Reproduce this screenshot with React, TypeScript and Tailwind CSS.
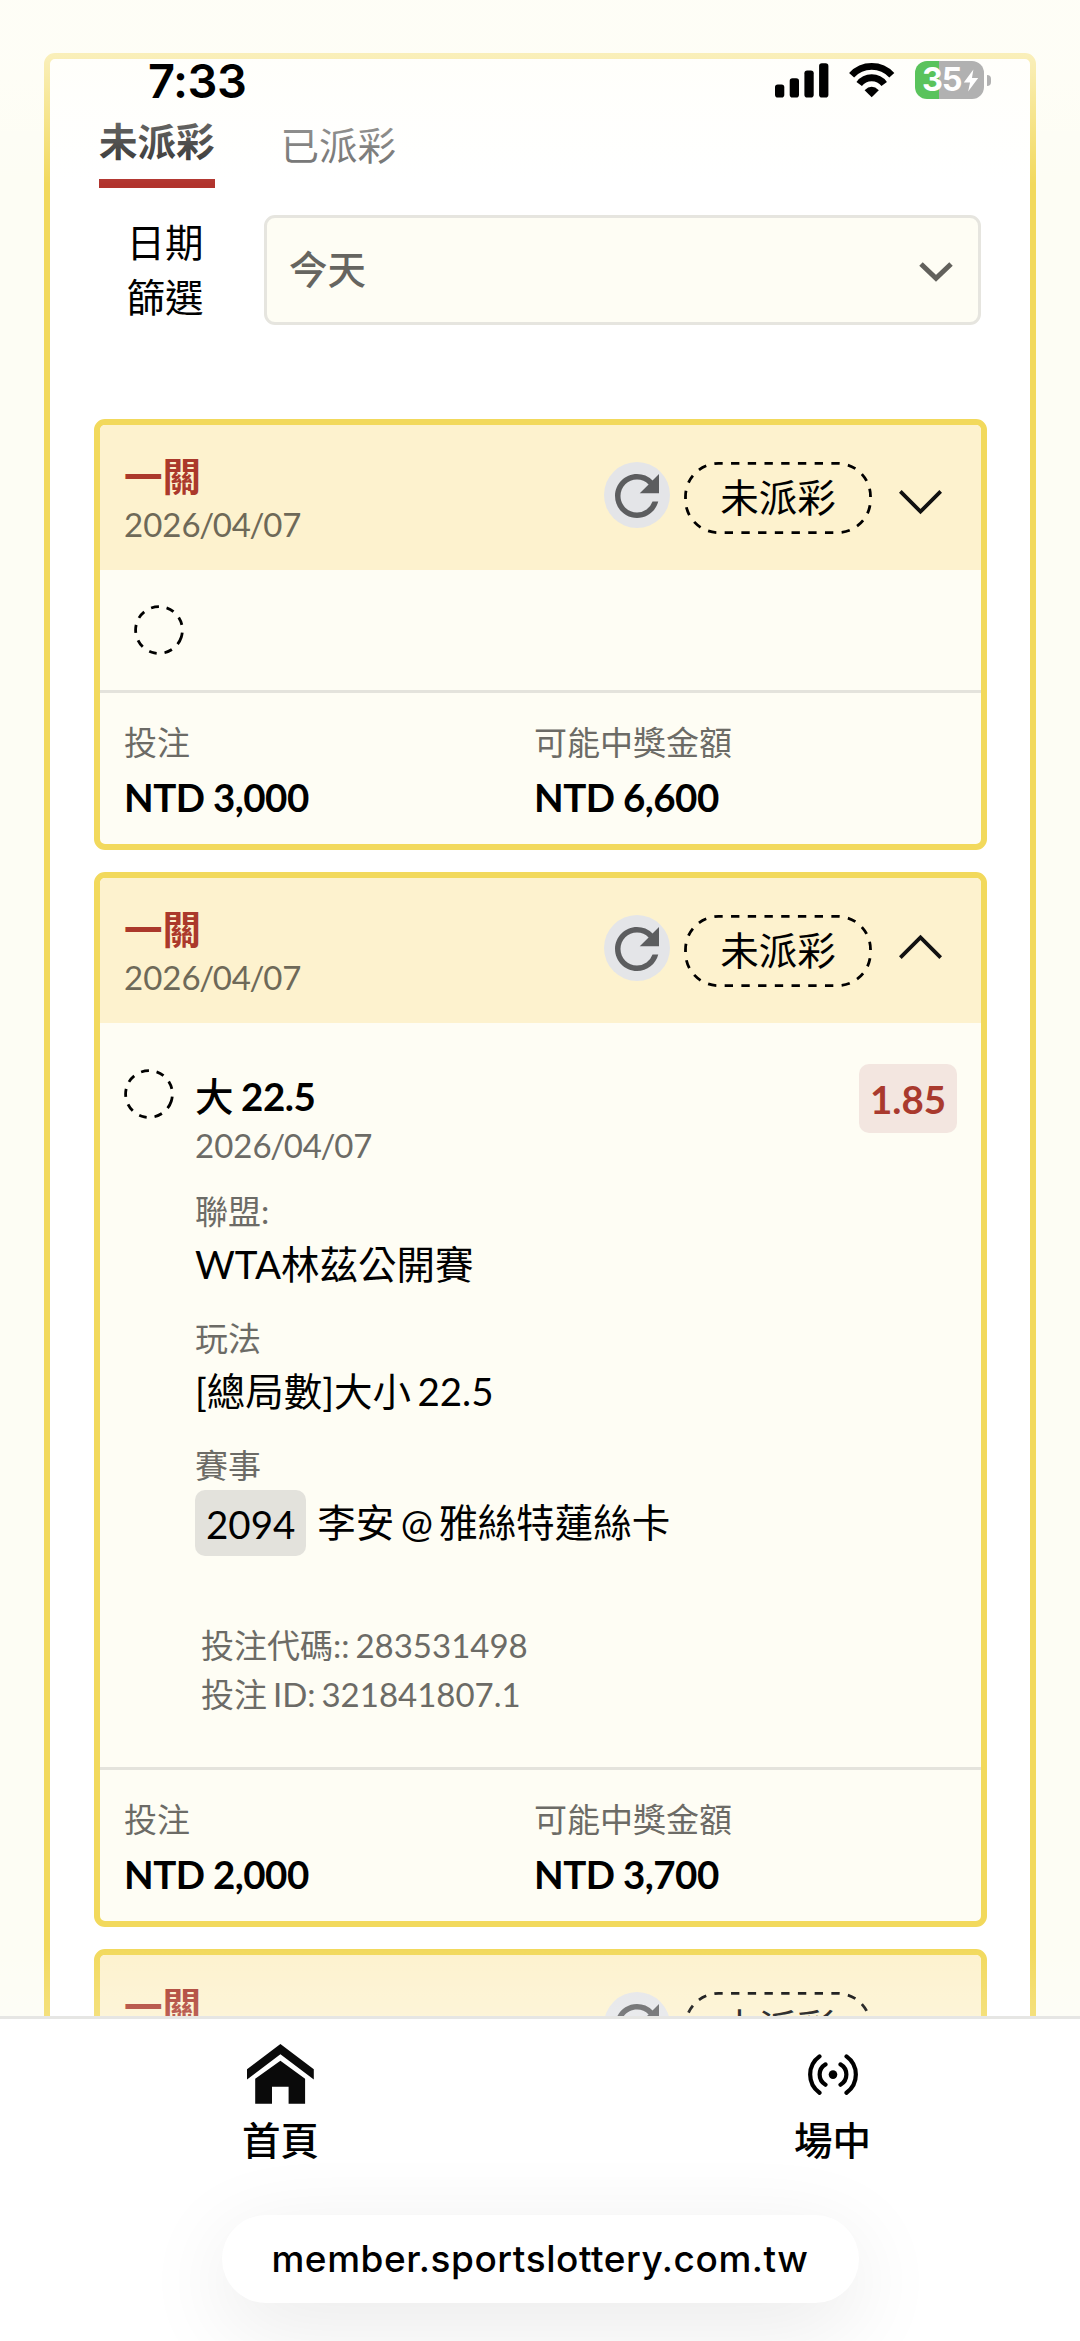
import clsx from 'clsx'
import React from 'react'
import { MdRefresh } from 'react-icons/md'

type Bet = {
    id: number
    amount?: string
    prize?: string
    open?: boolean
}

const bets: Bet[] = [
    { id: 1, amount: 'NTD 3,000', prize: 'NTD 6,600' },
    { id: 2, amount: 'NTD 2,000', prize: 'NTD 3,700', open: true },
    { id: 3 },
]

function StatusBar() {
    return (
        <div className="absolute inset-x-0 top-0 flex h-[185px] items-start bg-linear-to-b from-[#fffef8]/60 from-30% to-white/0 pt-[53px] pr-[89px] pl-[148px] font-['Inter',sans-serif]">
            <div className="text-[47px] leading-[55px] font-semibold tracking-[-0.5px] text-black">
                7:33
            </div>
            <svg className="mt-[9px] ml-auto h-[36px] w-[55px]" viewBox="0 0 55 36">
                <rect x="1" y="22.5" width="9.3" height="13" rx="2.8" />
                <rect x="15.7" y="16.2" width="9.3" height="19.3" rx="2.8" />
                <rect x="30.4" y="8.5" width="9.3" height="27" rx="2.8" />
                <rect x="45.1" y="1.3" width="9.3" height="34.2" rx="2.8" />
            </svg>
            <svg className="mt-[10px] ml-[20px] h-[35px] w-[46px]" viewBox="0 0 46 35">
                <path
                    d="M2.6 12.3A27.2 27.2 0 0 1 42.8 12.3M10.2 21A15.6 15.6 0 0 1 35.2 21"
                    fill="none"
                    stroke="#000"
                    strokeWidth="6.8"
                />
                <path d="M22.7 34.3L15.6 27.2Q22.7 20.4 29.8 27.2Z" />
            </svg>
            <div className="mt-[8px] ml-[20px] flex items-center">
                <div className="flex h-[38px] w-[69px] items-center rounded-[12px] bg-[linear-gradient(90deg,#5ac35c_0_24.5px,#b1b1b1_24.5px)] pl-[7px]">
                    <span className="text-[32.5px] leading-[38px] font-bold tracking-[-1.2px] text-white">
                        35
                    </span>
                    <svg className="ml-[2px] h-[23px] w-[16px]" viewBox="0 0 16 24">
                        <path d="M10.5 0.5L0.5 14H7L5 23.5L15.5 9.5H9Z" fill="#fff" />
                    </svg>
                </div>
                <div className="ml-[3px] h-[11px] w-[4px] rounded-r-full bg-[#b1b1b1]" />
            </div>
        </div>
    )
}

function PendingCircle({ className }: { className?: string }) {
    return (
        <svg className={clsx('size-[50px] shrink-0', className)} viewBox="0 0 50 50">
            <circle
                cx="25"
                cy="25"
                r="23.4"
                fill="none"
                stroke="#000"
                strokeWidth="2.8"
                pathLength="360"
                strokeDasharray="19.5 19.2"
                transform="rotate(18 25 25)"
            />
        </svg>
    )
}

function DateText({ value }: { value: string }) {
    return (
        <>
            {value.split('/').map((part, i) => (
                <React.Fragment key={i}>
                    {i > 0 && <span className="-mx-[1.4px]">/</span>}
                    {part}
                </React.Fragment>
            ))}
        </>
    )
}

function Chevron({ open }: { open?: boolean }) {
    return (
        <svg
            className={clsx('ml-[27px] h-[40px] w-[43px]', open && 'rotate-180')}
            viewBox="0 0 43 40"
        >
            <path d="M1.3 13.4L21.5 33.6L41.7 13.4" fill="none" stroke="#111" strokeWidth="3.8" />
        </svg>
    )
}

function CardHeader({ open }: { open?: boolean }) {
    return (
        <div className="flex h-[145px] items-center bg-[#fdf2ce] pr-[39px] pl-[24px]">
            <div className="mt-[6px]">
                <div className="text-[38.5px] leading-[47px] font-bold text-[#ab392b]">一關</div>
                <div className="mt-px text-[33px] leading-[47px] text-[#6e6958]">
                    <DateText value="2026/04/07" />
                </div>
            </div>
            <div className="-mt-[6px] ml-auto flex size-[66px] items-center justify-center rounded-full bg-[#e4e5e8]">
                <MdRefresh className="mt-[2px] size-[66px] shrink-0 text-[#5c5d5f]" />
            </div>
            <div className="relative ml-[14px] flex h-[72px] w-[188px] items-center justify-center text-[38.5px] text-black">
                <svg className="absolute inset-0 size-full" viewBox="0 0 188 72">
                    <rect
                        x="1.5"
                        y="1.4"
                        width="185"
                        height="69.2"
                        rx="33"
                        fill="none"
                        stroke="#000"
                        strokeWidth="2.8"
                        pathLength="54"
                        strokeDasharray="1 1"
                        strokeDashoffset="0.5"
                    />
                </svg>
                未派彩
            </div>
            <Chevron open={open} />
        </div>
    )
}

function Field({ label, children }: { label: string; children: React.ReactNode }) {
    return (
        <div className="mb-[26px]">
            <div className="text-[33px] leading-[48px] text-[#6c6b66]">{label}</div>
            <div className="mt-[5px] text-[38.5px] leading-[48px] text-black">{children}</div>
        </div>
    )
}

function BetDetail() {
    return (
        <div className="flex h-[744px] items-start pt-[41px] pr-[24px] pl-[24px]">
            <PendingCircle className="mt-[5px]" />
            <div className="mt-[8px] ml-[21px]">
                <div className="text-[38.5px] leading-[48px] text-black">
                    <span className="font-medium">大</span>
                    <span className="font-bold tracking-[-0.4px] [word-spacing:-1.5px]"> 22.5</span>
                </div>
                <div className="mt-px mb-[18px] text-[33px] leading-[48px] text-[#6c6b66]">
                    <DateText value="2026/04/07" />
                </div>
                <Field label="聯盟:">WTA林茲公開賽</Field>
                <Field label="玩法">[總局數]大小 22.5</Field>
                <div className="text-[33px] leading-[48px] text-[#6c6b66]">賽事</div>
                <div className="mt-px flex items-center text-[38.5px] text-black">
                    <span className="mr-[11px] h-[66px] rounded-[10px] bg-[#e3e2dc] px-[11px] leading-[68px]">
                        2094
                    </span>
                    <span>李安 @ 雅絲特蓮絲卡</span>
                </div>
                <div className="mt-[65px] ml-[6px] text-[33px] leading-[49px] text-[#6c6b66] [word-spacing:-2.5px]">
                    <div>投注代碼:: 283531498</div>
                    <div>投注 ID: 321841807.1</div>
                </div>
            </div>
            <div className="ml-auto flex h-[69px] w-[98px] items-center justify-center rounded-[10px] bg-[#f3e6e0] pt-[2px] text-[38.5px] font-bold text-[#a93a2e]">
                1.85
            </div>
        </div>
    )
}

function Total({ label, value }: { label: string; value?: string }) {
    return (
        <div>
            <div className="text-[33px] leading-[44px] text-[#6c6b66]">{label}</div>
            <div className="mt-[8px] text-[38.5px] leading-[50px] font-bold tracking-[-0.5px] text-black [word-spacing:-0.5px]">
                {value}
            </div>
        </div>
    )
}

function BetCard({ bet }: { bet: Bet }) {
    return (
        <div className="shrink-0 overflow-hidden rounded-[11px] border-6 border-[#f2d95c] bg-[#fefdf4]">
            <CardHeader open={bet.open} />
            {bet.open ? (
                <BetDetail />
            ) : (
                <div className="flex h-[120px] items-center pl-[34px]">
                    <PendingCircle />
                </div>
            )}
            {bet.amount && (
                <div className="grid h-[154px] grid-cols-[410px_1fr] border-t-3 border-[#e4e3dc] pt-[27px] pl-[24px]">
                    <Total label="投注" value={bet.amount} />
                    <Total label="可能中獎金額" value={bet.prize} />
                </div>
            )}
        </div>
    )
}

function BottomNav() {
    return (
        <div className="h-[325px] overflow-hidden border-t-3 border-[#e6e6e4] bg-white">
            <div className="flex h-[196px] text-[38.5px] leading-[50px] font-medium text-black">
                <div className="flex w-[561px] shrink-0 flex-col items-center pt-[25px]">
                    <svg className="h-[60px] w-[67px]" viewBox="0 0 67 60">
                        <path
                            d="M33.4 0L66.8 25.2V35.6L33.4 10.3L0 35.6V25.2ZM33.4 16.8L58.1 34.8V59.7H41.6V42.8H25V59.7H8.2V34.8Z"
                            fill="#0a0a0a"
                        />
                    </svg>
                    <div className="mt-[11px]">首頁</div>
                </div>
                <div className="flex w-[543px] shrink-0 flex-col items-center pt-[35px]">
                    <svg className="h-[42px] w-[50px]" viewBox="0 0 50 42">
                        <path
                            d="M11.5 2.4A22.4 22.4 0 0 0 11.5 38.8M38.5 2.4A22.4 22.4 0 0 1 38.5 38.8M17.5 10.4A11.8 11.8 0 0 0 17.5 30.8M32.5 10.4A11.8 11.8 0 0 1 32.5 30.8"
                            fill="none"
                            stroke="#000"
                            strokeWidth="4.2"
                            strokeLinecap="round"
                        />
                        <circle cx="25" cy="20.6" r="4.3" />
                    </svg>
                    <div className="mt-[19px]">場中</div>
                </div>
            </div>
            <div className="mx-auto flex h-[88px] w-[637px] items-center justify-center rounded-full bg-white font-['Inter',sans-serif] text-[37px] font-medium tracking-[0.55px] text-black shadow-[0_22px_90px_rgba(0,0,0,0.09)]">
                member.sportslottery.com.tw
            </div>
        </div>
    )
}

function App() {
    return (
        <div
            lang="zh-Hant"
            className="relative flex h-[2341px] w-[1080px] flex-col overflow-hidden bg-[#fdfdf4] font-['Lato','Noto_Sans_CJK_TC',sans-serif] [word-spacing:-3.5px]"
        >
            <div className="relative flex h-[2016px] flex-col overflow-hidden px-[44px] pt-[53px]">
                <div className="h-[2100px] shrink-0 rounded-t-[11px] border-6 border-[#f2d95c] bg-white pr-[43px] pl-[44px]">
                    <div className="flex h-[129px] items-start pl-[5px] text-[38.5px] leading-[50px]">
                        <div className="h-full border-b-9 border-[#b1332d] pt-[57px] font-bold text-[#262626]">
                            未派彩
                        </div>
                        <div className="ml-[66px] pt-[61px] text-[#686868]">已派彩</div>
                    </div>
                    <div className="mt-[27px] mr-[6px] flex h-[110px] items-center">
                        <div className="w-[170px] pl-[32px] text-[38.5px] leading-[55px] text-black">
                            <div className="w-[78px] text-center">
                                日期
                                <br />
                                篩選
                            </div>
                        </div>
                        <div className="flex h-[110px] flex-1 items-center justify-between rounded-[11px] border-3 border-[#e6e5df] bg-[#fefdf4] pr-[25px] pl-[22px] text-[38.5px] font-medium text-[#666560]">
                            今天
                            <svg className="mt-[4px] h-[20px] w-[34px]" viewBox="0 0 34 20">
                                <path
                                    d="M2 2L17 16.4L32 2"
                                    fill="none"
                                    stroke="#62615c"
                                    strokeWidth="5"
                                />
                            </svg>
                        </div>
                    </div>
                    <div className="mt-[94px] flex flex-col gap-[22px]">
                        {bets.map((bet) => (
                            <BetCard key={bet.id} bet={bet} />
                        ))}
                    </div>
                </div>
                <div className="absolute inset-x-0 bottom-0 h-[70px] bg-linear-to-b from-white/0 to-white/20" />
            </div>
            <BottomNav />
            <StatusBar />
        </div>
    )
}

export default App
